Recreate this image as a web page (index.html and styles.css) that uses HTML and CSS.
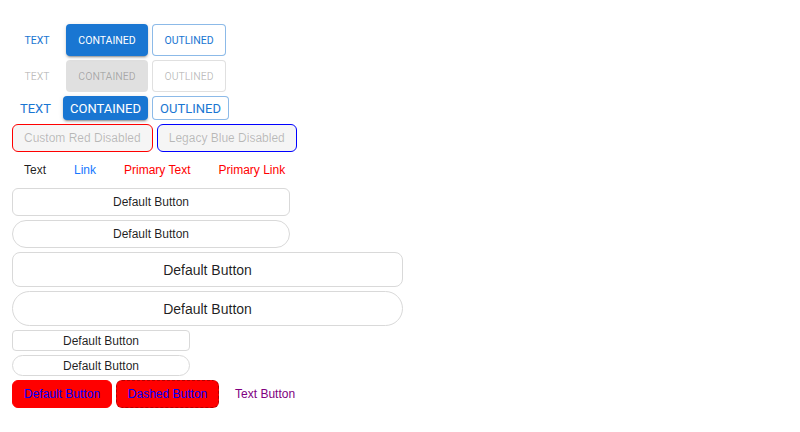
FILE: index.html
```html
<!DOCTYPE html>
<html>
<head>
<meta charset="utf-8">
<link rel="stylesheet" href="styles.css">
</head>
<body>
<div class="page">
  <div class="row">
    <button class="mui mui-sm mui-text">TEXT</button>
    <button class="mui mui-sm mui-contained">CONTAINED</button>
    <button class="mui mui-sm mui-outlined">OUTLINED</button>
  </div>
  <div class="row">
    <button class="mui mui-sm mui-text is-disabled">TEXT</button>
    <button class="mui mui-sm mui-contained is-disabled">CONTAINED</button>
    <button class="mui mui-sm mui-outlined is-disabled">OUTLINED</button>
  </div>
  <div class="row">
    <button class="mui mui-lg mui-text">TEXT</button>
    <button class="mui mui-lg mui-contained">CONTAINED</button>
    <button class="mui mui-lg mui-outlined">OUTLINED</button>
  </div>
  <div class="row">
    <button class="ant ant-disabled red-border">Custom Red Disabled</button>
    <button class="ant ant-disabled blue-border">Legacy Blue Disabled</button>
  </div>
  <div class="row">
    <button class="ant ant-plain">Text</button>
    <button class="ant ant-plain link">Link</button>
    <button class="ant ant-plain red">Primary Text</button>
    <button class="ant ant-plain red">Primary Link</button>
  </div>
  <button class="ant ant-default w-mid">Default Button</button>
  <button class="ant ant-default w-mid round">Default Button</button>
  <button class="ant ant-default ant-large w-wide">Default Button</button>
  <button class="ant ant-default ant-large w-wide round">Default Button</button>
  <button class="ant ant-default ant-small w-narrow">Default Button</button>
  <button class="ant ant-default ant-small w-narrow round">Default Button</button>
  <div class="row">
    <button class="ant custom-red">Default Button</button>
    <button class="ant custom-red dashed">Dashed Button</button>
    <button class="ant ant-plain purple">Text Button</button>
  </div>
</div>
</body>
</html>
```

FILE: styles.css
```css
html, body {
  margin: 0;
  padding: 0;
  background: #ffffff;
}

.page {
  display: flex;
  flex-direction: column;
  align-items: flex-start;
  gap: 4px;
  padding: 24px 12px;
}

.row {
  display: flex;
  align-items: center;
  gap: 4px;
}

button {
  margin: 0;
  box-sizing: border-box;
  display: inline-flex;
  align-items: center;
  justify-content: center;
  white-space: nowrap;
  cursor: pointer;
}

/* MUI-like */
.mui {
  font-family: Roboto, "Liberation Sans", sans-serif;
  font-weight: 400;
  border: 1px solid transparent;
  border-radius: 4px;
  background: transparent;
  color: #1976d2;
  padding: 0;
}

.mui-sm {
  height: 32px;
  font-size: 10.5px;
}

.mui-lg {
  height: 24px;
  font-size: 13px;
}

.mui-sm.mui-text { width: 50px; }
.mui-sm.mui-contained { width: 82px; }
.mui-sm.mui-outlined { width: 74px; }
.mui-lg.mui-text { width: 47px; }
.mui-lg.mui-contained { width: 85px; }
.mui-lg.mui-outlined { width: 77px; }

.mui-contained {
  background: #1976d2;
  color: #ffffff;
  box-shadow: 0 3px 1px -2px rgba(0,0,0,0.2), 0 2px 2px 0 rgba(0,0,0,0.14), 0 1px 5px 0 rgba(0,0,0,0.12);
}

.mui-outlined {
  border-color: rgba(25,118,210,0.5);
  background: #ffffff;
}

.mui-text.is-disabled { color: rgba(0,0,0,0.26); }
.mui-contained.is-disabled {
  background: rgba(0,0,0,0.12);
  color: rgba(0,0,0,0.26);
  box-shadow: none;
}
.mui-outlined.is-disabled {
  border-color: rgba(0,0,0,0.12);
  color: rgba(0,0,0,0.26);
}

/* Ant-like */
.ant {
  font-family: "Liberation Sans", Arial, sans-serif;
  font-size: 12px;
  height: 28px;
  padding: 0 11px;
  border: 1px solid transparent;
  border-radius: 6px;
  background: #ffffff;
  color: rgba(0,0,0,0.88);
}

.ant-disabled {
  background: #f5f5f5;
  color: rgba(0,0,0,0.25);
}
.red-border { border-color: #ff0000; }
.blue-border { border-color: #0000ff; }

.ant-plain {
  border: none;
  background: transparent;
  padding: 0 12px;
}
.link { color: #1677ff; }
.red { color: #ff0000; }
.purple { color: #800080; }

.ant-default {
  border-color: #d9d9d9;
}
.ant-large {
  height: 35px;
  font-size: 14px;
  border-radius: 8px;
}
.ant-small {
  height: 21px;
  border-radius: 4px;
}
.round { border-radius: 999px; }

.w-mid { width: 278px; }
.w-wide { width: 391px; }
.w-narrow { width: 178px; }

.custom-red {
  background: #ff0000;
  color: #0000ff;
  border-color: #ff0000;
}
.custom-red.dashed {
  border: 1px dashed #b30000;
  width: 103px;
  padding: 0;
}
```
